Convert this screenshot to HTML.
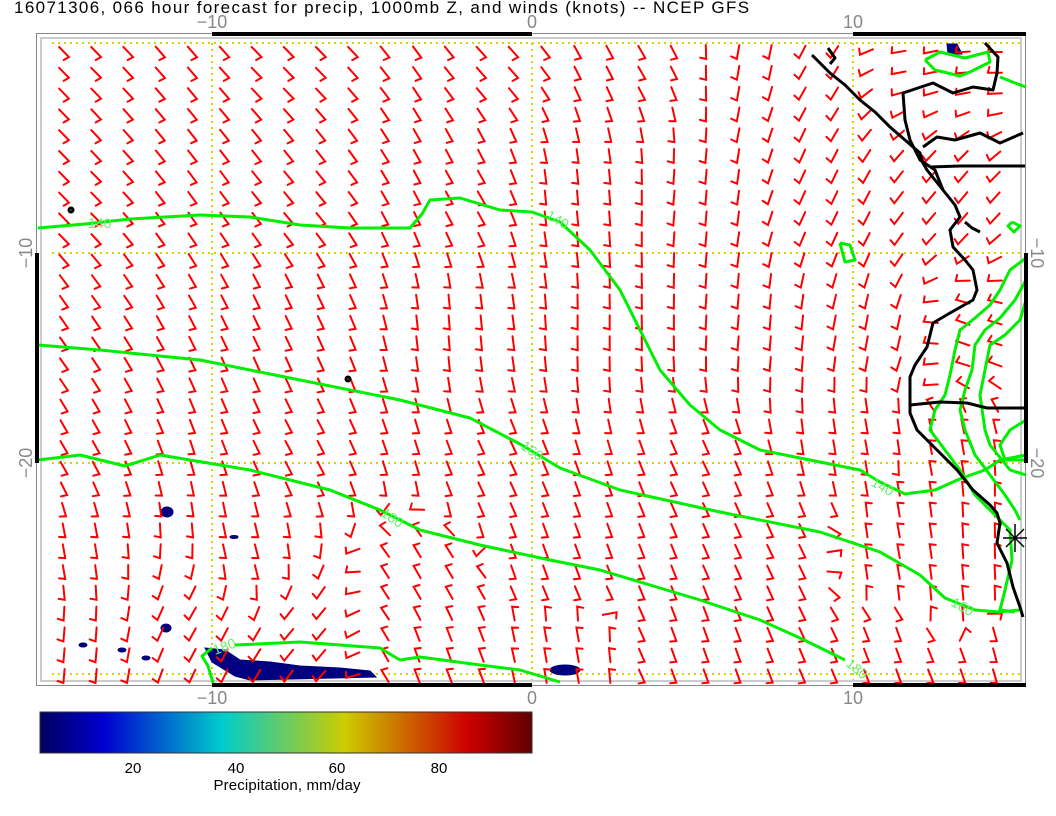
<!DOCTYPE html>
<html><head><meta charset="utf-8"><style>
html,body{margin:0;padding:0;background:#fff;width:1056px;height:816px;overflow:hidden;font-family:"Liberation Sans",sans-serif}
svg{position:absolute;left:0;top:0}
</style></head><body>
<svg id="s" width="1056" height="816" xmlns="http://www.w3.org/2000/svg" font-family="Liberation Sans, sans-serif">
<defs>
<linearGradient id="cb" x1="0" x2="1" y1="0" y2="0">
<stop offset="0" stop-color="#000060"/>
<stop offset="0.13" stop-color="#0000d0"/>
<stop offset="0.37" stop-color="#00cccc"/>
<stop offset="0.62" stop-color="#cccc00"/>
<stop offset="0.87" stop-color="#cc0000"/>
<stop offset="1" stop-color="#600000"/>
</linearGradient>
</defs>
<text x="14" y="13" font-size="17" letter-spacing="0.9" fill="#000" textLength="736" lengthAdjust="spacing">16071306, 066 hour forecast for precip, 1000mb Z, and winds (knots) -- NCEP GFS</text>
<g fill="#888" font-size="18" text-anchor="middle">
<text x="212" y="28">−10</text><text x="532" y="28">0</text><text x="853" y="28">10</text>
<text x="212" y="704">−10</text><text x="532" y="704">0</text><text x="853" y="704">10</text>
<text transform="translate(32,253) rotate(-90)">−10</text>
<text transform="translate(32,463) rotate(-90)">−20</text>
<text transform="translate(1031,253) rotate(90)">−10</text>
<text transform="translate(1031,463) rotate(90)">−20</text>
</g>
<rect x="36.5" y="33.5" width="989" height="652" fill="none" stroke="#888" stroke-width="1"/>
<rect x="41" y="38" width="980" height="643" fill="none" stroke="#ccc" stroke-width="2"/>
<g stroke="#d4d400" stroke-width="2" stroke-dasharray="2,4" fill="none">
<line x1="52" y1="43" x2="1020" y2="43"/><line x1="52" y1="253" x2="1020" y2="253"/>
<line x1="52" y1="463" x2="1020" y2="463"/><line x1="52" y1="674" x2="1020" y2="674"/>
<line x1="212" y1="43" x2="212" y2="680"/><line x1="532" y1="43" x2="532" y2="680"/><line x1="853" y1="43" x2="853" y2="680"/>
</g>
<g fill="#000080" stroke="#000070">
<path d="M205,648 L225,650 L240,660 L270,662 L300,666 L340,668 L370,671 L376,677 L250,680 L235,676 L212,662 Z"/>
<ellipse cx="565" cy="670" rx="15" ry="5"/>
<ellipse cx="167" cy="512" rx="6" ry="5"/>
<ellipse cx="166" cy="628" rx="5" ry="4"/>
<ellipse cx="83" cy="645" rx="4" ry="2"/><ellipse cx="122" cy="650" rx="4" ry="2"/><ellipse cx="146" cy="658" rx="4" ry="2"/>
<ellipse cx="234" cy="537" rx="4" ry="1.5"/>
<path d="M947,44 L957,44 L962,54 L948,54 Z"/>
</g>
<g id="barbs" stroke="#ff0000" stroke-width="2" fill="none" stroke-linecap="round"></g>
<g stroke="#00ee00" stroke-width="3" fill="none" stroke-linejoin="round">
<polyline points="38,228 85,224 130,219 200,215 250,217 300,225 350,228 410,228 422,214 430,200 460,198 500,210 532,212 560,222 590,250 620,290 640,330 660,370 690,405 720,430 760,450 820,462 860,470 880,482 905,494 935,490 962,478 985,470 1000,460 1026,455"/>
<polyline points="38,345 100,350 200,360 300,380 400,400 470,418 520,444 560,468 620,490 720,512 820,532 880,552 920,575 945,598 975,610 1000,612 1020,610"/>
<polyline points="38,460 80,455 125,466 160,455 250,470 330,490 380,510 420,530 480,545 550,560 600,570 650,585 700,600 760,620 800,638 845,660"/>
<polyline points="212,648 202,656 208,666 214,686"/>
<polyline points="235,645 300,642 380,648 400,660 420,657 480,665 520,670 560,682"/>
<polyline points="925,60 940,52 965,58 988,52 990,62 970,72 960,76 935,70 925,60"/>
<polyline points="1000,77 1015,83 1026,87"/>
<polyline points="1026,258 1010,270 1000,290 990,305 975,318 960,330 955,350 950,375 945,395 935,410 930,430 945,450 960,470 975,495 995,515 1010,530 1012,560 1005,590 1000,610 1015,612"/>
<polyline points="1026,280 1015,300 1000,318 985,330 975,345 972,370 965,390 960,410 965,430 975,455 990,475 1005,495 1015,510 1020,520"/>
<polyline points="1026,300 1020,320 1005,335 990,345 985,370 980,395 985,430 990,445 1010,470 1026,475"/>
<polyline points="1026,420 1010,430 1000,445 1005,460 1026,460"/>
<polyline points="840,243 850,245 855,260 845,262 840,243"/>
<polyline points="1012,222 1020,226 1014,232 1008,226 1012,222"/>
</g>
<g fill="#66ee66" font-size="14">
<text x="88" y="228">140</text><text x="545" y="218" transform="rotate(30,545,218)">140</text>
<text x="520" y="448" transform="rotate(35,520,448)">160</text><text x="380" y="515" transform="rotate(35,380,515)">180</text>
<text x="870" y="485" transform="rotate(30,870,485)">140</text><text x="950" y="605" transform="rotate(30,950,605)">160</text>
<text x="845" y="665" transform="rotate(40,845,665)">180</text><text x="215" y="655" transform="rotate(-20,215,655)">180</text>
</g>
<g stroke="#000" stroke-width="3" fill="none" stroke-linejoin="round">
<polyline points="812,55 830,73 845,85 860,100 875,112 890,127 905,140 920,153 923,163 927,170 943,190 955,205 960,217 950,230 953,247 965,260 973,270 977,290 973,300 950,313 933,323 927,347 915,365 910,377 910,413 917,430 940,453 957,470 973,490 990,505 997,513 1000,523 997,543 1007,563 1013,587 1020,607 1023,617"/>
<polyline points="930,167 960,166 1000,166 1025,166"/>
<polyline points="923,147 937,137 955,140 980,133 1000,143 1023,133"/>
<polyline points="943,190 935,170 920,160 910,140 905,120 903,93 933,83 953,93 973,87 993,90 997,73 998,57 985,43"/>
<polyline points="910,405 940,402 967,403 987,408 1025,408"/>
<circle cx="71" cy="210" r="2"/><circle cx="348" cy="379" r="2"/>
<polyline points="828,48 835,58 830,64"/>
<polyline points="965,222 972,228 980,232"/>
</g>
<g stroke="#000" stroke-width="1.5">
<line x1="1015" y1="524" x2="1015" y2="552"/><line x1="1003" y1="538" x2="1027" y2="538"/>
<line x1="1006" y1="529" x2="1024" y2="547"/><line x1="1006" y1="547" x2="1024" y2="529"/>
</g>
<g fill="#000">
<rect x="212" y="32" width="320" height="4"/><rect x="853" y="32" width="173" height="4"/>
<rect x="212" y="683" width="320" height="4"/><rect x="853" y="683" width="173" height="4"/>
<rect x="35" y="253" width="4" height="210"/><rect x="1024" y="253" width="4" height="210"/>
</g>
<rect x="40" y="712" width="492" height="41" fill="url(#cb)" stroke="#333" stroke-width="1"/>
<g font-size="15" fill="#000" text-anchor="middle">
<text x="133" y="773">20</text><text x="236" y="773">40</text><text x="337" y="773">60</text><text x="439" y="773">80</text>
<text x="287" y="790" textLength="147" lengthAdjust="spacing">Precipitation, mm/day</text>
</g>
</svg>
<script>
var C=[[60,60,45],[300,60,45],[500,60,48],[650,60,60],[750,60,100],[820,80,120],[900,60,170],[1000,60,180],
[60,200,45],[300,200,50],[480,200,60],[560,200,85],[700,200,95],[820,200,115],[950,200,130],
[60,350,55],[300,330,65],[450,330,85],[600,330,90],[760,330,95],[880,330,100],[960,330,200],
[60,450,60],[300,450,62],[500,470,65],[700,470,65],[870,430,80],[950,450,260],[1000,500,270],
[60,560,80],[250,560,75],[420,580,240],[560,560,70],[760,560,65],[900,560,260],[960,600,265],
[60,640,95],[200,620,120],[300,630,130],[430,650,250],[560,650,260],[700,650,70],[900,650,70],[1000,650,75]];
var g=document.getElementById('barbs'),h='';
for(var j=0;j<31;j++){for(var i=0;i<30;i++){
var x=64+i*32.1,y=52+j*20.8;if(y>680)continue;
var sx=0,sy=0;for(var k=0;k<C.length;k++){var dx=x-C[k][0],dy=y-C[k][1];var w=1/Math.pow(dx*dx+dy*dy+100,1.5);var a=C[k][2]*Math.PI/180;sx+=w*Math.cos(a);sy+=w*Math.sin(a);}
var n=Math.sqrt(sx*sx+sy*sy);var ux=sx/n,uy=sy/n;
var x1=x-ux*7,y1=y-uy*7,x2=x+ux*7,y2=y+uy*7;
var bx=x2-uy*6-ux*1.5,by=y2+ux*6-uy*1.5;
h+='<polyline points="'+x1.toFixed(1)+','+y1.toFixed(1)+' '+x2.toFixed(1)+','+y2.toFixed(1)+' '+bx.toFixed(1)+','+by.toFixed(1)+'"/>';
}}
g.innerHTML=h;
</script>
</body></html>
